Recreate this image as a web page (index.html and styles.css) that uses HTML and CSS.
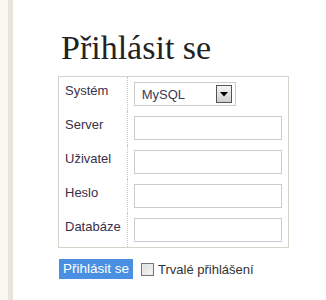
FILE: index.html
```html
<!DOCTYPE html>
<html lang="cs">
<head>
<meta charset="utf-8">
<link rel="stylesheet" href="styles.css">
</head>
<body>
<div class="page">
  <div class="side"></div>
  <main class="content">
    <h1 class="title">Přihlásit se</h1>
    <form class="login">
      <table class="grid">
        <tr>
          <th>Systém</th>
          <td>
            <div class="select">
              <span class="select-value">MySQL</span>
              <span class="select-btn"><svg width="8" height="5" viewBox="0 0 8 5"><path d="M0 0H8L4 4.5Z" fill="#000"/></svg></span>
            </div>
          </td>
        </tr>
        <tr><th>Server</th><td><span class="field"></span></td></tr>
        <tr><th>Uživatel</th><td><span class="field"></span></td></tr>
        <tr><th>Heslo</th><td><span class="field"></span></td></tr>
        <tr><th>Databáze</th><td><span class="field"></span></td></tr>
      </table>
      <div class="actions">
        <span class="submit">Přihlásit se</span>
        <label class="remember"><span class="check"></span>Trvalé přihlášení</label>
      </div>
    </form>
  </main>
</div>
</body>
</html>
```
FILE: styles.css
```css
html, body {
  margin: 0;
  padding: 0;
  background: #fff;
}
.page {
  display: flex;
  min-height: 300px;
}
.side {
  width: 8px;
  background: #faf8f1;
  border-right: 5px solid #e7e4db;
  flex: none;
}
.content {
  padding-left: 45px;
  font-family: "Liberation Sans", Arial, sans-serif;
  font-size: 13px;
  color: #333;
}
.title {
  font-family: "Liberation Serif", "Times New Roman", serif;
  font-weight: normal;
  font-size: 34px;
  line-height: 39px;
  color: #222;
  margin: 28px 0 9px 3px;
}
.grid {
  border-collapse: collapse;
  border: 1px solid #d6d3ca;
  width: 231px;
}
.grid th {
  font-weight: normal;
  text-align: left;
  vertical-align: top;
  padding: 6px 6px 0 6px;
  width: 55px;
  color: #3a2f48;
  border-right: 1px dotted #c9c6bd;
  height: 28px;
  white-space: nowrap;
}
.grid td {
  padding: 5px 0 5px 6px;
  vertical-align: top;
}
.field {
  display: block;
  width: 146px;
  height: 22px;
  border: 1px solid #cccccc;
  background: #fff;
}
.select {
  display: flex;
  align-items: center;
  width: 100px;
  height: 22px;
  border: 1px solid #cccccc;
  box-sizing: content-box;
}
.select-value {
  flex: 1;
  padding-left: 7px;
  font-size: 13px;
  color: #3b3a5c;
  padding-top: 1px;
}
.select-btn {
  width: 14px;
  height: 16px;
  margin-right: 3px;
  border: 1px solid #555;
  background: linear-gradient(#f4f4f4, #cfcfcf);
  display: flex;
  align-items: center;
  justify-content: center;
}
.actions {
  display: flex;
  align-items: center;
  margin-top: 11px;
  gap: 8px;
}
.submit {
  display: inline-block;
  background: #4a90e2;
  color: #fff;
  padding: 2px 4px 3px 4px;
  line-height: 15px;
  font-size: 13.5px;
  margin-left: 1px;
}
.remember {
  display: flex;
  align-items: center;
  color: #333;
  font-size: 13px;
}
.check {
  width: 11px;
  height: 11px;
  border: 1px solid #777;
  background: linear-gradient(135deg, #dcdcdc, #f8f8f8);
  margin-right: 4px;
  box-shadow: inset 0 0 0 1px #e8e8e8;
}
```
